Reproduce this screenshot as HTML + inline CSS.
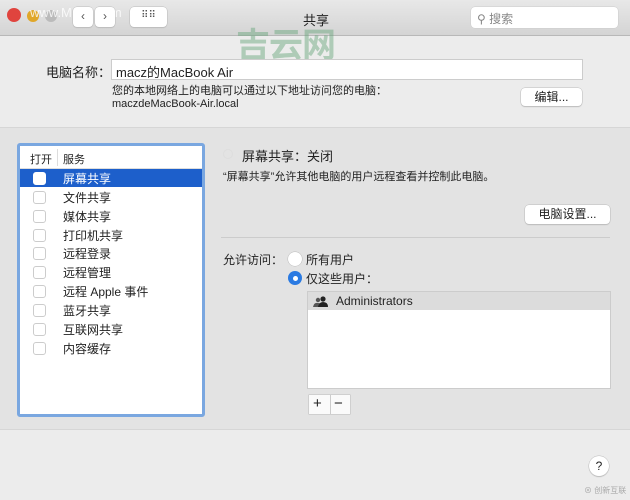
<!DOCTYPE html>
<html><head><meta charset="utf-8"><style>
*{box-sizing:border-box;margin:0;padding:0}
body{width:630px;height:500px;overflow:hidden;background:#ececec;font-family:"Liberation Sans","Noto Sans CJK SC",sans-serif;font-size:12px;color:#222;position:relative}
.a{position:absolute}
.btn{position:absolute;background:#fff;border-radius:4px;box-shadow:0 0 0 .5px #bbb,0 1px 1px #bbb;text-align:center;font-size:12px}
.cb{position:absolute;left:33px;width:13px;height:13px;border:1px solid #ccc;border-radius:3px;background:#fff}
.row{position:absolute;left:63px;font-size:12px}
</style></head><body>
<div class="a" style="left:0;top:0;width:630px;height:36px;background:linear-gradient(#e8e8e8,#d4d4d4);border-bottom:1px solid #b8b8b8"></div>
<div class="a" style="left:7px;top:8px;width:14px;height:14px;border-radius:50%;background:#e0443e"></div>
<div class="a" style="left:27px;top:10px;width:12px;height:12px;border-radius:50%;background:#e0a72a"></div>
<div class="a" style="left:45px;top:10px;width:12px;height:12px;border-radius:50%;background:#bbb"></div>
<div class="a" style="left:30px;top:5px;font-size:13px;color:#fff;opacity:.8">www.MacZ.com</div>
<div class="btn" style="left:73px;top:7px;width:20px;height:20px;line-height:19px;color:#555">‹</div>
<div class="btn" style="left:95px;top:7px;width:20px;height:20px;line-height:19px;color:#555">›</div>
<div class="btn" style="left:130px;top:7px;width:37px;height:20px;line-height:18px;color:#555;font-size:10px">⠿⠿</div>
<div class="a" style="left:303px;top:10px;font-size:13px">共享</div>
<div class="a" style="left:471px;top:7px;width:147px;height:21px;background:#fff;border-radius:4px;box-shadow:0 0 0 .5px #ccc"></div>
<div class="a" style="left:477px;top:10px;color:#888;font-size:12px">⚲ 搜索</div>
<div class="a" style="left:236px;top:18px;font-size:34px;font-weight:bold;color:rgba(100,165,120,.45);letter-spacing:-1px">吉云网</div>
<div class="a" style="left:46px;top:62px;font-size:13px">电脑名称：</div>
<div class="a" style="left:112px;top:60px;width:470px;height:19px;background:#fff;box-shadow:0 0 0 1px #ccc"></div>
<div class="a" style="left:116px;top:62px;font-size:13px">macz的MacBook Air</div>
<div class="a" style="left:112px;top:85px;font-size:11px;line-height:13px">您的本地网络上的电脑可以通过以下地址访问您的电脑：<br>maczdeMacBook-Air.local</div>
<div class="btn" style="left:521px;top:88px;width:61px;height:18px;line-height:18px">编辑...</div>
<div class="a" style="left:0;top:127px;width:630px;height:303px;background:#e3e3e3;border-top:1px solid #d6d6d6;border-bottom:1px solid #d6d6d6"></div>
<div class="a" style="left:17px;top:143px;width:188px;height:274px;background:#fff;border:3px solid #7aa7e0;border-radius:3px"></div>
<div class="a" style="left:20px;top:146px;width:182px;height:23px;border-bottom:1px solid #ddd"></div>
<div class="a" style="left:57px;top:149px;width:1px;height:17px;background:#ddd"></div>
<div class="a" style="left:30px;top:151px;font-size:11px">打开</div>
<div class="a" style="left:63px;top:151px;font-size:11px">服务</div>
<div class="a" style="left:20px;top:169px;width:182px;height:18px;background:#1d5fcb"></div>
<div class="cb" style="top:172px;border-color:#fff"></div><div class="row" style="top:170px;color:#fff">屏幕共享</div>
<div class="cb" style="top:191px"></div><div class="row" style="top:189px">文件共享</div>
<div class="cb" style="top:210px"></div><div class="row" style="top:208px">媒体共享</div>
<div class="cb" style="top:229px"></div><div class="row" style="top:227px">打印机共享</div>
<div class="cb" style="top:247px"></div><div class="row" style="top:245px">远程登录</div>
<div class="cb" style="top:266px"></div><div class="row" style="top:264px">远程管理</div>
<div class="cb" style="top:285px"></div><div class="row" style="top:283px">远程 Apple 事件</div>
<div class="cb" style="top:304px"></div><div class="row" style="top:302px">蓝牙共享</div>
<div class="cb" style="top:323px"></div><div class="row" style="top:321px">互联网共享</div>
<div class="cb" style="top:342px"></div><div class="row" style="top:340px">内容缓存</div>
<div class="a" style="left:223px;top:149px;width:10px;height:10px;border-radius:50%;border:1px solid #ddd"></div>
<div class="a" style="left:242px;top:146px;font-size:13px">屏幕共享：关闭</div>
<div class="a" style="left:223px;top:168px;font-size:11px">“屏幕共享”允许其他电脑的用户远程查看并控制此电脑。</div>
<div class="btn" style="left:525px;top:205px;width:85px;height:19px;line-height:19px">电脑设置...</div>
<div class="a" style="left:221px;top:237px;width:389px;height:1px;background:#ccc"></div>
<div class="a" style="left:223px;top:251px;font-size:12px">允许访问：</div>
<div class="a" style="left:288px;top:252px;width:14px;height:14px;border-radius:50%;background:#fff;box-shadow:0 0 0 .5px #bbb"></div>
<div class="a" style="left:306px;top:251px;font-size:12px">所有用户</div>
<div class="a" style="left:288px;top:271px;width:14px;height:14px;border-radius:50%;background:#2a7ae2"></div>
<div class="a" style="left:293px;top:276px;width:5px;height:5px;border-radius:50%;background:#fff"></div>
<div class="a" style="left:306px;top:270px;font-size:12px">仅这些用户：</div>
<div class="a" style="left:308px;top:292px;width:302px;height:96px;background:#fff;box-shadow:0 0 0 1px #ccc"></div>
<div class="a" style="left:308px;top:292px;width:302px;height:18px;background:#dcdcdc"></div>
<svg class="a" style="left:313px;top:296px" width="16" height="12"><circle cx="5" cy="4" r="2.2" fill="#555"/><circle cx="10" cy="3" r="2.6" fill="#222"/><path d="M0 11q1-5 5-4q2 0 3 1L8 11z" fill="#555"/><path d="M5 11q1-5 5-5q5 0 5 5z" fill="#222"/></svg>
<div class="a" style="left:336px;top:294px;font-size:12px">Administrators</div>
<div class="a" style="left:309px;top:395px;width:41px;height:19px;background:#fafafa;box-shadow:0 0 0 .5px #bbb"></div>
<div class="a" style="left:330px;top:395px;width:1px;height:19px;background:#ccc"></div>
<div class="a" style="left:313px;top:395px;font-size:15px;line-height:17px">+</div>
<div class="a" style="left:334px;top:395px;font-size:15px;line-height:17px">−</div>
<div class="a" style="left:589px;top:456px;width:20px;height:20px;border-radius:50%;background:#fff;box-shadow:0 0 0 .5px #bbb,0 1px 1px #bbb;text-align:center;line-height:20px;font-size:12px">?</div>
<div class="a" style="left:584px;top:485px;font-size:8px;color:#aaa">⊗ 创新互联</div>
</body></html>
